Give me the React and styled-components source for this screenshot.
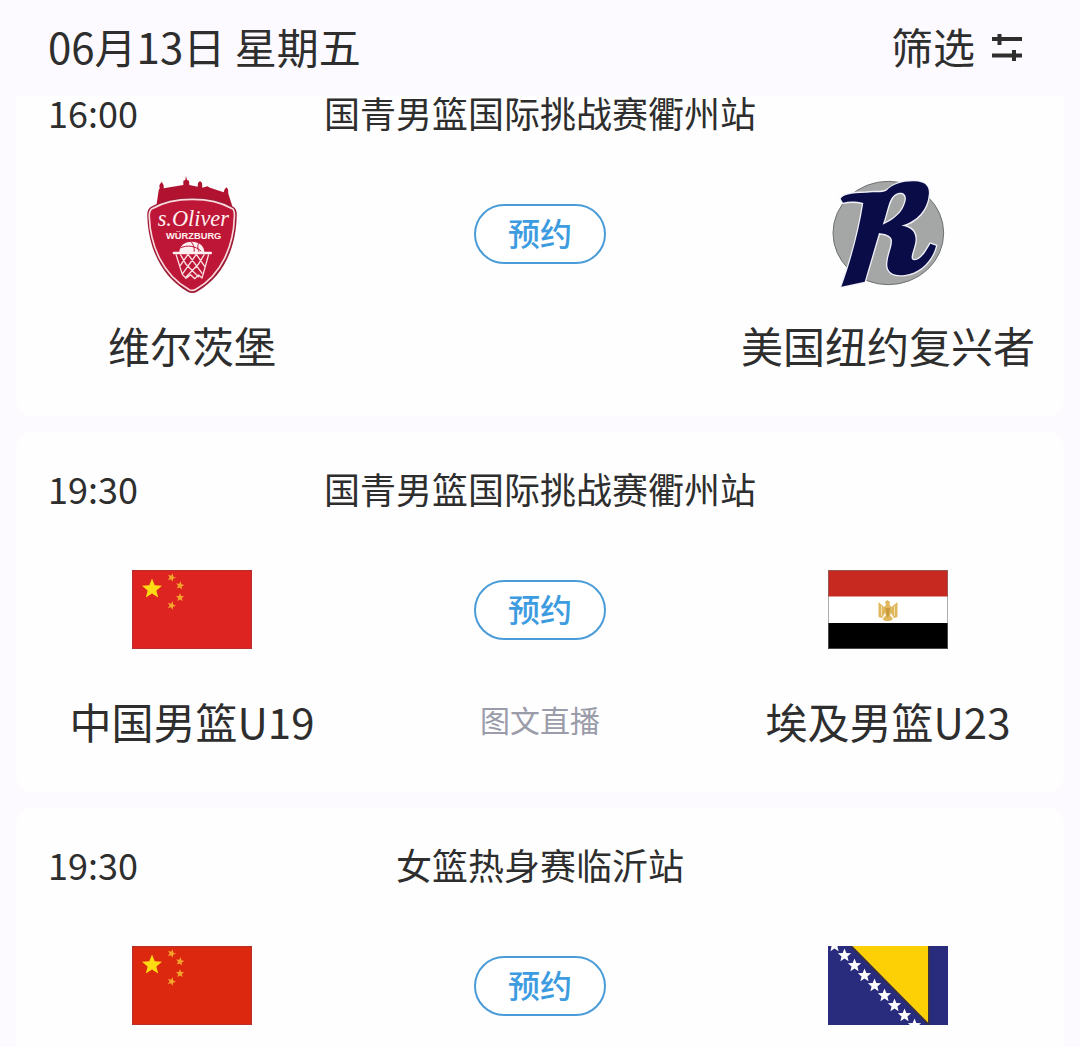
import React from "react";
import styled, { createGlobalStyle } from "styled-components";

const GlobalStyle = createGlobalStyle`
  * { box-sizing: border-box; }
  body {
    margin: 0;
    background: #fcfaff;
    color: #2e2e2e;
    font-family: "Noto Sans CJK SC", sans-serif;
  }
`;

const Page = styled.main`
  display: flex;
  flex-direction: column;
  height: 100vh;
  overflow: hidden;
`;

const TopBar = styled.header`
  position: relative;
  z-index: 1;
  flex: none;
  display: flex;
  align-items: center;
  justify-content: space-between;
  height: 96px;
  padding: 0 48px 4px;
  background: #fcfaff;
`;

const DateTitle = styled.h1`
  margin: 0;
  font-size: 42px;
  font-weight: 400;
  line-height: 60px;
`;

const FilterButton = styled.button`
  display: flex;
  align-items: center;
  gap: 9px;
  padding: 0;
  border: 0;
  background: none;
  color: inherit;
  font: inherit;
  font-size: 42px;
  line-height: 60px;
  cursor: pointer;
`;

/* The list is scrolled so that its first card slides under the top bar. */
const MatchList = styled.section`
  flex: 1;
  display: flex;
  flex-direction: column;
  gap: 16px;
  margin-top: -40px;
  padding: 0 16px;
  overflow: hidden;
`;

const Card = styled.article`
  flex: none;
  padding: 32px 0 41px;
  border-radius: 16px;
  background: #fefefe;
`;

const CardHeader = styled.div`
  display: grid;
  grid-template-columns: 1fr auto 1fr;
  padding: 0 32px;
  font-size: 36px;
  line-height: 48px;
`;

const League = styled.h2`
  margin: 0;
  font-size: inherit;
  font-weight: 400;
`;

const CardBody = styled.div`
  display: grid;
  grid-template-columns: 352px 1fr 352px;
  margin-top: 38px;
`;

const Column = styled.div`
  display: flex;
  flex-direction: column;
  align-items: center;
  gap: 21px;
`;

const MediaBox = styled.div`
  display: flex;
  align-items: center;
  justify-content: center;
  height: 120px;
`;

const TeamName = styled.div`
  font-size: 42px;
  line-height: 60px;
  white-space: nowrap;
`;

const ReserveButton = styled.button`
  width: 132px;
  height: 60px;
  padding: 0 0 4px;
  border: 2px solid #4a9cd8;
  border-radius: 30px;
  background: #fff;
  color: #3d9be0;
  font: inherit;
  font-size: 32px;
  font-weight: 500;
  line-height: 52px;
  cursor: pointer;
`;

const LiveTag = styled.a`
  color: #9a9caa;
  font-size: 30px;
  line-height: 56px;
  text-decoration: none;
`;

const starPoints = (cx, cy, r, turn = 0) =>
  Array.from({ length: 10 }, (_, i) => {
    const radius = i % 2 ? r * 0.44 : r;
    const a = ((i * 36 - 90 + turn) * Math.PI) / 180;
    return `${(cx + radius * Math.cos(a)).toFixed(2)},${(cy + radius * Math.sin(a)).toFixed(2)}`;
  }).join(" ");

function FilterIcon() {
  return (
    <svg width="48" height="40" viewBox="0 0 48 40" fill="none" stroke="#2e2e2e" strokeWidth="4" aria-hidden="true">
      <path d="M8 13H38M8 29.500H38M15.500 8V19M30 24V35" />
    </svg>
  );
}

function ChinaFlag({ red = "#de2420" }) {
  return (
    <svg width="120" height="80" viewBox="0 0 120 80" role="img" aria-label="中国">
      <rect width="120" height="79" fill={red} />
      <rect x=".5" y=".5" width="119" height="78" fill="none" stroke="#a0353a" strokeOpacity=".6" />
      <polygon points={starPoints(20, 19, 10.5)} fill="#fddb12" />
      <g fill="#f2a62b">
        <polygon points={starPoints(39.5, 7.5, 4.4, 20)} />
        <polygon points={starPoints(48, 15.5, 4.4, 10)} />
        <polygon points={starPoints(48, 27.5, 4.4)} />
        <polygon points={starPoints(39.5, 35.5, 4.4, 20)} />
      </g>
    </svg>
  );
}

function EgyptFlag() {
  return (
    <svg width="120" height="80" viewBox="0 0 120 80" role="img" aria-label="埃及">
      <rect width="120" height="79" fill="#fff" />
      <rect width="120" height="26.5" fill="#c72820" />
      <rect y="53" width="120" height="26" fill="#000" />
      <rect x=".5" y=".5" width="119" height="78" fill="none" stroke="#777" strokeOpacity=".6" />
      <path
        d="M50.500 32L56 37 58 35 57 32 59.500 30 62 32 61.500 35 63.500 37 69.500 32V47L66 48 63 43 62 45 65 49 62 51H57L54.500 49 58 45 57 43 54 48 50.500 47Z"
        fill="#dfb75c"
      />
      <path d="M57.500 38H62L61 45 59.800 48 58.500 45Z" fill="#c99a3d" />
      <path d="M53.500 36V46M66.500 36V46" stroke="#f3dfae" strokeWidth="1" />
    </svg>
  );
}

function BosniaFlag() {
  return (
    <svg width="120" height="80" viewBox="0 0 120 80" role="img" aria-label="波黑">
      <defs>
        <clipPath id="bosnia"><rect width="120" height="79" /></clipPath>
      </defs>
      <g clipPath="url(#bosnia)">
        <rect width="120" height="79" fill="#292b7d" />
        <path d="M22 -1H101V79Z" fill="#fdcf05" stroke="#393148" strokeWidth="2" />
        <g fill="#fff">
          {Array.from({ length: 9 }, (_, i) => (
            <polygon key={i} points={starPoints(6.5 + i * 10, -0.5 + i * 10, 7)} />
          ))}
        </g>
      </g>
    </svg>
  );
}

function WurzburgLogo() {
  return (
    <svg width="120" height="120" viewBox="6 27 360 360" role="img" aria-label="s.Oliver Würzburg">
      <path
        d="M79 124L86 76 89 70 88 61 95 50 101 61 101 70 160 60 160 47 166 45 168 33 171 45 177 47 178 60 203 65 204 54 210 48 216 54 217 68 232 64 240 68 281 82 284 73 289 67 294 73 295 86 307 124 250 108H135Z"
        fill="#b01230"
      />
      <path
        d="M187 97C235 97 278 107 311 126 320 132 321 143 320 156 318 245 282 335 201 380 192 385 182 385 173 380 93 335 55 245 52 156 51 143 53 132 62 126 96 107 140 97 187 97Z"
        fill="#9d1a35"
      />
      <path
        d="M187 103C234 103 274 112 307 131 314 136 314 145 313 157 311 240 276 328 198 373 191 377 182 377 176 373 97 328 61 240 58 157 57 145 59 136 66 131 99 112 140 103 187 103Z"
        fill="#be1636" stroke="#f8d9dd" strokeWidth="5"
      />
      <g fill="#fff0f1" textAnchor="middle">
        <text x="190" y="183" fontFamily="Liberation Serif, serif" fontStyle="italic" fontSize="67">s.Oliver</text>
        <text x="191" y="222" fontFamily="Liberation Sans, sans-serif" fontWeight="700" fontSize="28">WÜRZBURG</text>
      </g>
      <path d="M148 264C147 243 163 230 185 230 210 230 224 245 223 264Z" fill="#fff0f1" />
      <g fill="none" stroke="#be1636" strokeWidth="3">
        <path d="M151 249C171 239 196 242 214 259M183 230C192 240 194 252 192 264M206 235C201 244 204 255 209 264" />
      </g>
      <rect x="128" y="260" width="118" height="8" rx="3" fill="#fff0f1" />
      <path
        d="M138 268L157 328 168 340 182 329 194 341 206 330 216 339 220 326 236 268M151 268L168 298 207 337M174 268L217 326M199 268L224 304M223 268L205 298 166 338M199 268L158 326M174 268L149 304"
        fill="none" stroke="#fbdfe3" strokeWidth="4" strokeLinejoin="round"
      />
    </svg>
  );
}

function RenegadesLogo() {
  return (
    <svg width="120" height="120" viewBox="24 27 360 360" role="img" aria-label="美国纽约复兴者">
      <ellipse cx="205" cy="204" rx="166" ry="155" fill="#a5a6a6" stroke="#6d7074" strokeWidth="3" />
      <path
        d="M62 101C68 90 90 84 139 83 165 80 184 84 199 77 220 56 249 48 284 49 317 50 330 65 326 91 322 133 292 170 244 182 275 186 290 202 286 231 282 257 264 286 284 286 301 286 318 260 331 236L348 242C339 282 305 323 254 330 220 334 200 322 202 295 204 265 220 240 215 222 211 211 197 207 177 204L134 350 64 365C89 298 116 205 130 114 108 109 89 108 69 113ZM188 179C220 165 248 143 256 111 264 84 243 77 224 89 205 101 201 146 188 179Z"
        fill="#090c46" fillRule="evenodd" stroke="#f1f1fa" strokeWidth="8" strokeLinejoin="round" paintOrder="stroke"
      />
    </svg>
  );
}

const matches = [
  {
    time: "16:00",
    league: "国青男篮国际挑战赛衢州站",
    home: { name: "维尔茨堡", logo: <WurzburgLogo /> },
    away: { name: "美国纽约复兴者", logo: <RenegadesLogo /> },
  },
  {
    time: "19:30",
    league: "国青男篮国际挑战赛衢州站",
    live: "图文直播",
    home: { name: "中国男篮U19", logo: <ChinaFlag /> },
    away: { name: "埃及男篮U23", logo: <EgyptFlag /> },
  },
  {
    time: "19:30",
    league: "女篮热身赛临沂站",
    home: { name: "", logo: <ChinaFlag red="#dd2810" /> },
    away: { name: "", logo: <BosniaFlag /> },
  },
];

function Team({ team }) {
  return (
    <Column>
      <MediaBox>{team.logo}</MediaBox>
      {team.name && <TeamName>{team.name}</TeamName>}
    </Column>
  );
}

function Match({ match }) {
  return (
    <Card>
      <CardHeader>
        <time>{match.time}</time>
        <League>{match.league}</League>
      </CardHeader>
      <CardBody>
        <Team team={match.home} />
        <Column>
          <MediaBox>
            <ReserveButton type="button">预约</ReserveButton>
          </MediaBox>
          {match.live && <LiveTag href="#live">{match.live}</LiveTag>}
        </Column>
        <Team team={match.away} />
      </CardBody>
    </Card>
  );
}

export default function App() {
  return (
    <>
      <GlobalStyle />
      <Page>
        <TopBar>
          <DateTitle>06月13日 星期五</DateTitle>
          <FilterButton type="button">
            筛选
            <FilterIcon />
          </FilterButton>
        </TopBar>
        <MatchList>
          {matches.map((match, i) => (
            <Match key={i} match={match} />
          ))}
        </MatchList>
      </Page>
    </>
  );
}
